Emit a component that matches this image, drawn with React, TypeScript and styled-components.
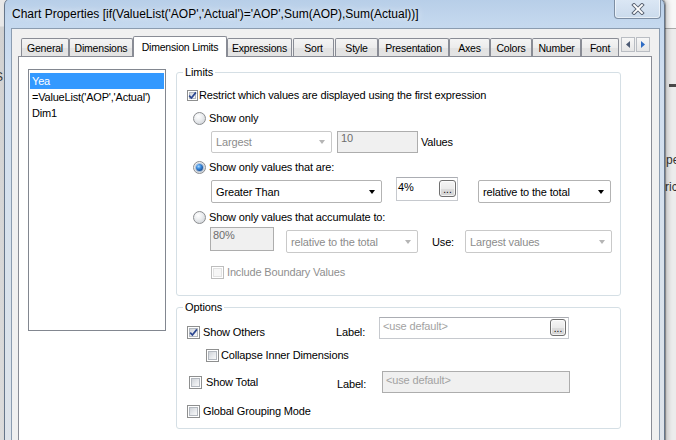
import React from 'react';
import styled, { createGlobalStyle } from 'styled-components';

const GlobalStyle = createGlobalStyle`
  html, body { margin: 0; padding: 0; }
  body {
    width: 676px; height: 440px; overflow: hidden;
    font-family: "Liberation Sans", Arial, sans-serif;
  }
  * { box-sizing: border-box; }
`;

const Desktop = styled.div`
  position: relative;
  width: 676px;
  height: 440px;
  overflow: hidden;
  background: #ececec;
`;

const BackLeft = styled.div`
  position: absolute;
  left: 0; top: 0;
  width: 6px; height: 440px;
  background: linear-gradient(180deg, #e8e8e8 0px, #e8e8e8 26px, #d2d2d2 27px, #dcdcdc 440px);
  overflow: hidden;
`;

const BackLetter = styled.span<{ $top: number; $left: number }>`
  position: absolute;
  top: ${p => p.$top}px;
  left: ${p => p.$left}px;
  font-size: 12px;
  line-height: 14px;
  color: #333;
  white-space: nowrap;
`;

const BackRightHead = styled.div`
  position: absolute;
  left: 664px; top: 0;
  width: 12px; height: 29px;
  background: #f7f7f7;
  border-bottom: 1px solid #a9a9a9;
`;

const BackBar = styled.div`
  position: absolute;
  left: 669px; top: 84px;
  width: 8px; height: 3px;
  background: #4a4a4a;
`;

const Window = styled.div`
  position: absolute;
  left: 4px; top: -2px;
  width: 661px; height: 480px;
  display: flex;
  flex-direction: column;
  padding: 0 4px 0 6px;
  border: 1px solid #66768a;
  border-radius: 7px 7px 0 0;
  background: linear-gradient(180deg, #b7cee8 0px, #c4d8ee 24px, #cfdef0 70px, #d8e2ec 260px, #dfe4ea 480px);
  box-shadow: 1px 0 1px rgba(0,0,0,0.35), 3px 0 5px rgba(0,0,0,0.18);
`;

const TitleBar = styled.div`
  height: 29px;
  flex: none;
  display: flex;
  align-items: flex-start;
  justify-content: space-between;
`;

const Title = styled.div`
  align-self: center;
  padding-left: 1px;
  padding-top: 1px;
  font-size: 12px;
  line-height: 15px;
  color: #000;
  white-space: nowrap;
  text-shadow: 0 0 6px rgba(255,255,255,0.9);
`;

const CloseButton = styled.div`
  width: 47px;
  height: 20px;
  margin-right: -1px;
  border: 1px solid #7d8ea3;
  border-top: none;
  border-radius: 0 0 4px 4px;
  background: linear-gradient(180deg, rgba(235,242,250,0.7), rgba(205,220,236,0.8));
  box-shadow: inset 0 0 0 1px rgba(255,255,255,0.55);
  display: flex;
  align-items: center;
  justify-content: center;
  padding-top: 1px;
`;

const Client = styled.div`
  flex: 1;
  display: flex;
  flex-direction: column;
  background: #f0f0f0;
  border: 1px solid #8b9cb0;
  border-bottom: none;
  padding: 7px 7px 0 6px;
`;

const TabStrip = styled.div`
  position: relative;
  height: 20px;
  flex: none;
  display: flex;
  align-items: flex-end;
  padding-left: 3px;
`;

const Tab = styled.div<{ $w: number; $active?: boolean; $ml?: number }>`
  width: ${p => p.$w}px;
  margin-left: ${p => p.$ml ?? 0}px;
  height: ${p => (p.$active ? 21 : 18)}px;
  margin-bottom: ${p => (p.$active ? -1 : 0)}px;
  position: relative;
  z-index: ${p => (p.$active ? 2 : 1)};
  border: 1px solid #898c95;
  border-bottom: none;
  border-radius: 2px 2px 0 0;
  background: ${p =>
    p.$active ? '#ffffff' : 'linear-gradient(180deg, #f4f4f4 0%, #ececec 50%, #e2e2e2 51%, #e4e4e4 100%)'};
  display: flex;
  align-items: center;
  justify-content: center;
  padding-bottom: ${p => (p.$active ? 1 : 0)}px;
  font-size: 10.5px;
  letter-spacing: -0.2px;
  color: #000;
  white-space: nowrap;
  overflow: hidden;
`;

const ScrollButtons = styled.div`
  position: absolute;
  left: 603px;
  top: 1px;
  z-index: 3;
  display: flex;
  gap: 1px;
`;

const ScrollButton = styled.span`
  width: 14px;
  height: 15px;
  border: 1px solid #b9bdc3;
  background: linear-gradient(180deg, #f7f7f7, #e6e6e6);
  display: flex;
  align-items: center;
  justify-content: center;
`;

const TabPage = styled.div`
  flex: 1;
  background: #fff;
  border: 1px solid #898c95;
  display: flex;
  align-items: flex-start;
  gap: 10px;
  padding: 9px 0 0 9px;
`;

const ListBox = styled.div`
  flex: none;
  width: 138px;
  height: 262px;
  margin-top: 3px;
  border: 1px solid #828790;
  padding: 3px 1px 0;
  background: #fff;
`;

const ListItem = styled.div<{ $selected?: boolean }>`
  height: 16px;
  line-height: 16px;
  padding-left: 2px;
  font-size: 11px;
  letter-spacing: -0.2px;
  white-space: nowrap;
  color: ${p => (p.$selected ? '#fff' : '#000')};
  background: ${p => (p.$selected ? '#3399ff' : 'transparent')};
`;

const Groups = styled.div`
  flex: none;
  width: 445px;
  display: flex;
  flex-direction: column;
`;

const GroupBox = styled.fieldset<{ $mt?: number; $pb: number }>`
  margin: ${p => p.$mt ?? 0}px 0 0;
  padding: 0 10px ${p => p.$pb}px 10px;
  border: 1px solid #d5dfe5;
  border-radius: 3px;
  min-width: 0;
`;

const Legend = styled.legend`
  font-size: 11px;
  line-height: 13px;
  letter-spacing: -0.1px;
  padding: 0 2px;
  margin-left: -4px;
  color: #000;
`;

const Row = styled.div<{ $mt: number; $h: number; $indent?: number; $align?: string }>`
  display: flex;
  align-items: ${p => p.$align ?? 'center'};
  margin-top: ${p => p.$mt}px;
  height: ${p => p.$h}px;
  padding-left: ${p => p.$indent ?? 0}px;
`;

const Text = styled.span<{ $tone?: 'normal' | 'disabled'; $mt?: number; $ml?: number; $w?: number }>`
  flex: none;
  font-size: 11px;
  line-height: 13px;
  letter-spacing: -0.15px;
  white-space: nowrap;
  color: ${p => (p.$tone === 'disabled' ? '#8f8f8f' : '#000')};
  margin-top: ${p => p.$mt ?? 0}px;
  margin-left: ${p => p.$ml ?? 0}px;
  ${p => (p.$w ? `width: ${p.$w}px;` : '')}
`;

const CheckLabel = styled.label<{ $gap: number; $mt?: number; $w?: number }>`
  flex: none;
  display: flex;
  align-items: center;
  gap: ${p => p.$gap}px;
  margin-top: ${p => p.$mt ?? 0}px;
  ${p => (p.$w ? `width: ${p.$w}px;` : '')}
`;

const CheckBoxBox = styled.span<{ $size: number; $disabled?: boolean }>`
  position: relative;
  flex: none;
  width: ${p => p.$size}px;
  height: ${p => p.$size}px;
  border: 1px solid ${p => (p.$disabled ? '#bdbdbd' : '#8e8f8f')};
  background: #fff;
  display: flex;
  align-items: center;
  justify-content: center;
  &::before {
    content: '';
    position: absolute;
    inset: 1px;
    border: 1px solid ${p => (p.$disabled ? '#e2e2e2' : '#b3b8bf')};
    background: ${p =>
      p.$disabled ? '#f6f6f6' : 'linear-gradient(135deg, #cfd3d8 0%, #e9ebee 60%, #f8f8f8 100%)'};
  }
  svg { position: relative; }
`;

const RadioCircle = styled.span`
  position: relative;
  flex: none;
  width: 13px;
  height: 13px;
  border-radius: 50%;
  border: 1px solid #8b8d90;
  background: radial-gradient(circle at 38% 32%, #ffffff 0%, #eceef0 40%, #c9cdd2 100%);
  display: flex;
  align-items: center;
  justify-content: center;
`;

const RadioDot = styled.span`
  width: 7px;
  height: 7px;
  border-radius: 50%;
  background: radial-gradient(circle at 38% 35%, #a8d8ff 0%, #3d8de0 35%, #154c93 75%, #0d3468 100%);
  box-shadow: 0 0 0 1px rgba(60,110,170,0.35);
`;

const Combo = styled.div<{ $w: number; $h: number; $disabled?: boolean; $mt?: number; $ml?: number }>`
  flex: none;
  width: ${p => p.$w}px;
  height: ${p => p.$h}px;
  margin-top: ${p => p.$mt ?? 0}px;
  margin-left: ${p => p.$ml ?? 0}px;
  display: flex;
  align-items: center;
  justify-content: space-between;
  padding: 0 6px 0 4px;
  border: 1px solid ${p => (p.$disabled ? '#c9c9c9' : '#b3b3b3')};
  border-radius: 2px;
  background: #fff;
  font-size: 11px;
  letter-spacing: -0.15px;
  white-space: nowrap;
  color: ${p => (p.$disabled ? '#8c8c8c' : '#000')};
`;

const Arrow = styled.span<{ $disabled?: boolean }>`
  width: 0;
  height: 0;
  border-left: 3.5px solid transparent;
  border-right: 3.5px solid transparent;
  border-top: 4px solid ${p => (p.$disabled ? '#b5b5b5' : '#000')};
`;

const Edit = styled.div<{ $w: number; $h: number; $disabled?: boolean; $mt?: number; $ml?: number }>`
  flex: none;
  width: ${p => p.$w}px;
  height: ${p => p.$h}px;
  margin-top: ${p => p.$mt ?? 0}px;
  margin-left: ${p => p.$ml ?? 0}px;
  display: flex;
  align-items: flex-start;
  justify-content: space-between;
  border: 1px solid ${p => (p.$disabled ? '#adadad' : '#c6c9ce')};
  border-top-color: ${p => (p.$disabled ? '#adadad' : '#abadb3')};
  background: ${p => (p.$disabled ? '#f0f0f0' : '#fff')};
`;

const EditText = styled.span<{ $pt: number; $pl: number; $tone: 'value' | 'muted' | 'placeholder' }>`
  padding-top: ${p => p.$pt}px;
  padding-left: ${p => p.$pl}px;
  font-size: 11px;
  line-height: 13px;
  letter-spacing: -0.15px;
  white-space: nowrap;
  color: ${p => (p.$tone === 'value' ? '#000' : p.$tone === 'muted' ? '#6d6d6d' : '#a2a2a2')};
`;

const DotsButton = styled.span<{ $w: number; $mt: number; $mr: number }>`
  flex: none;
  width: ${p => p.$w}px;
  height: 17px;
  margin-top: ${p => p.$mt}px;
  margin-right: ${p => p.$mr}px;
  border: 1px solid #707070;
  border-radius: 3px;
  background: linear-gradient(180deg, #f6f6f6 0%, #ebebeb 50%, #dddddd 51%, #d3d3d3 100%);
  box-shadow: inset 0 0 0 1px rgba(255,255,255,0.7);
  display: flex;
  align-items: flex-end;
  justify-content: center;
  font-size: 10px;
  line-height: 12px;
  color: #000;
`;

const CheckMark = () => (
  <svg width="9" height="9" viewBox="0 0 9 9">
    <path d="M1.2 4.6 L3.4 7 L7.9 1.4" fill="none" stroke="#2b4690" strokeWidth="1.7" />
  </svg>
);

type CheckProps = {
  label: string;
  checked?: boolean;
  disabled?: boolean;
  size?: number;
  gap?: number;
  mt?: number;
  w?: number;
};

const CheckItem = ({ label, checked, disabled, size = 13, gap = 3, mt, w }: CheckProps) => (
  <CheckLabel $gap={gap} $mt={mt} $w={w}>
    <CheckBoxBox $size={size} $disabled={disabled}>
      {checked && <CheckMark />}
    </CheckBoxBox>
    <Text $tone={disabled ? 'disabled' : 'normal'}>{label}</Text>
  </CheckLabel>
);

const RadioItem = ({ label, checked }: { label: string; checked?: boolean }) => (
  <CheckLabel $gap={3}>
    <RadioCircle>{checked && <RadioDot />}</RadioCircle>
    <Text>{label}</Text>
  </CheckLabel>
);

const tabs = [
  { label: 'General', w: 48 },
  { label: 'Dimensions', w: 64 },
  { label: 'Dimension Limits', w: 94, active: true },
  { label: 'Expressions', w: 65 },
  { label: 'Sort', w: 41, ml: 1 },
  { label: 'Style', w: 43, ml: 1 },
  { label: 'Presentation', w: 71 },
  { label: 'Axes', w: 41 },
  { label: 'Colors', w: 42 },
  { label: 'Number', w: 49 },
  { label: 'Font', w: 38 },
];

export default function App() {
  return (
    <>
      <GlobalStyle />
      <Desktop>
        <BackLeft>
          <BackLetter $top={70} $left={-5}>S</BackLetter>
        </BackLeft>
        <BackRightHead />
        <BackBar />
        <BackLetter $top={153} $left={666}>pe</BackLetter>
        <BackLetter $top={180} $left={665}>ric</BackLetter>

        <Window>
          <TitleBar>
            <Title>Chart Properties [if(ValueList('AOP','Actual')='AOP',Sum(AOP),Sum(Actual))]</Title>
            <CloseButton>
              <svg width="14" height="12" viewBox="0 0 14 12">
                <path d="M3 2 L11 10 M11 2 L3 10" stroke="#5a6474" strokeWidth="3.8" strokeLinecap="square" />
                <path d="M3 2 L11 10 M11 2 L3 10" stroke="#ffffff" strokeWidth="1.8" strokeLinecap="square" />
              </svg>
            </CloseButton>
          </TitleBar>

          <Client>
            <TabStrip>
              {tabs.map(t => (
                <Tab key={t.label} $w={t.w} $ml={t.ml} $active={t.active}>
                  {t.label}
                </Tab>
              ))}
              <ScrollButtons>
                <ScrollButton>
                  <svg width="4" height="7" viewBox="0 0 4 7">
                    <path d="M4 0 L0 3.5 L4 7 Z" fill="#4d5b74" />
                  </svg>
                </ScrollButton>
                <ScrollButton>
                  <svg width="4" height="7" viewBox="0 0 4 7">
                    <path d="M0 0 L4 3.5 L0 7 Z" fill="#2f6cc4" />
                  </svg>
                </ScrollButton>
              </ScrollButtons>
            </TabStrip>

            <TabPage>
              <ListBox>
                <ListItem $selected>Yea</ListItem>
                <ListItem>=ValueList('AOP','Actual')</ListItem>
                <ListItem>Dim1</ListItem>
              </ListBox>

              <Groups>
                <GroupBox $pb={16}>
                  <Legend>Limits</Legend>
                  <Row $mt={9} $h={14}>
                    <CheckItem label="Restrict which values are displayed using the first expression" checked size={11} gap={1} />
                  </Row>
                  <Row $mt={9} $h={14} $indent={6}>
                    <RadioItem label="Show only" />
                  </Row>
                  <Row $mt={6} $h={22} $indent={24}>
                    <Combo $w={121} $h={22} $disabled>
                      Largest
                      <Arrow $disabled />
                    </Combo>
                    <Edit $w={81} $h={22} $ml={5} $disabled>
                      <EditText $pt={0} $pl={3} $tone="muted">10</EditText>
                    </Edit>
                    <Text $ml={3}>Values</Text>
                  </Row>
                  <Row $mt={7} $h={14} $indent={6}>
                    <RadioItem label="Show only values that are:" checked />
                  </Row>
                  <Row $mt={3} $h={27} $indent={24} $align="flex-start">
                    <Combo $w={171} $h={23} $mt={3}>
                      Greater Than
                      <Arrow />
                    </Combo>
                    <Edit $w={62} $h={24} $ml={14}>
                      <EditText $pt={3} $pl={1} $tone="value">4%</EditText>
                      <DotsButton $w={17} $mt={2} $mr={1}>...</DotsButton>
                    </Edit>
                    <Combo $w={133} $h={23} $mt={3} $ml={20}>
                      relative to the total
                      <Arrow />
                    </Combo>
                  </Row>
                  <Row $mt={6} $h={14} $indent={6}>
                    <RadioItem label="Show only values that accumulate to:" />
                  </Row>
                  <Row $mt={3} $h={27} $indent={23} $align="flex-start">
                    <Edit $w={64} $h={24} $disabled>
                      <EditText $pt={1} $pl={2} $tone="muted">80%</EditText>
                    </Edit>
                    <Combo $w={132} $h={23} $mt={3} $ml={12} $disabled>
                      relative to the total
                      <Arrow $disabled />
                    </Combo>
                    <Text $ml={14} $mt={9} $w={33}>Use:</Text>
                    <Combo $w={147} $h={23} $mt={3} $disabled>
                      Largest values
                      <Arrow $disabled />
                    </Combo>
                  </Row>
                  <Row $mt={11} $h={14} $indent={24}>
                    <CheckItem label="Include Boundary Values" disabled />
                  </Row>
                </GroupBox>

                <GroupBox $mt={5} $pb={10}>
                  <Legend>Options</Legend>
                  <Row $mt={3} $h={22} $align="flex-start">
                    <CheckItem label="Show Others" checked mt={9} w={149} />
                    <Text $mt={9} $w={43}>Label:</Text>
                    <Edit $w={190} $h={22}>
                      <EditText $pt={2} $pl={3} $tone="placeholder">&lt;use default&gt;</EditText>
                      <DotsButton $w={16} $mt={1} $mr={2}>...</DotsButton>
                    </Edit>
                  </Row>
                  <Row $mt={9} $h={14} $indent={19}>
                    <CheckItem label="Collapse Inner Dimensions" gap={2} />
                  </Row>
                  <Row $mt={9} $h={22} $indent={2} $align="flex-start">
                    <CheckItem label="Show Total" mt={5} w={148} gap={4} />
                    <Text $mt={7} $w={45}>Label:</Text>
                    <Edit $w={188} $h={22} $disabled>
                      <EditText $pt={2} $pl={3} $tone="placeholder">&lt;use default&gt;</EditText>
                    </Edit>
                  </Row>
                  <Row $mt={11} $h={14}>
                    <CheckItem label="Global Grouping Mode" />
                  </Row>
                </GroupBox>
              </Groups>
            </TabPage>
          </Client>
        </Window>
      </Desktop>
    </>
  );
}
